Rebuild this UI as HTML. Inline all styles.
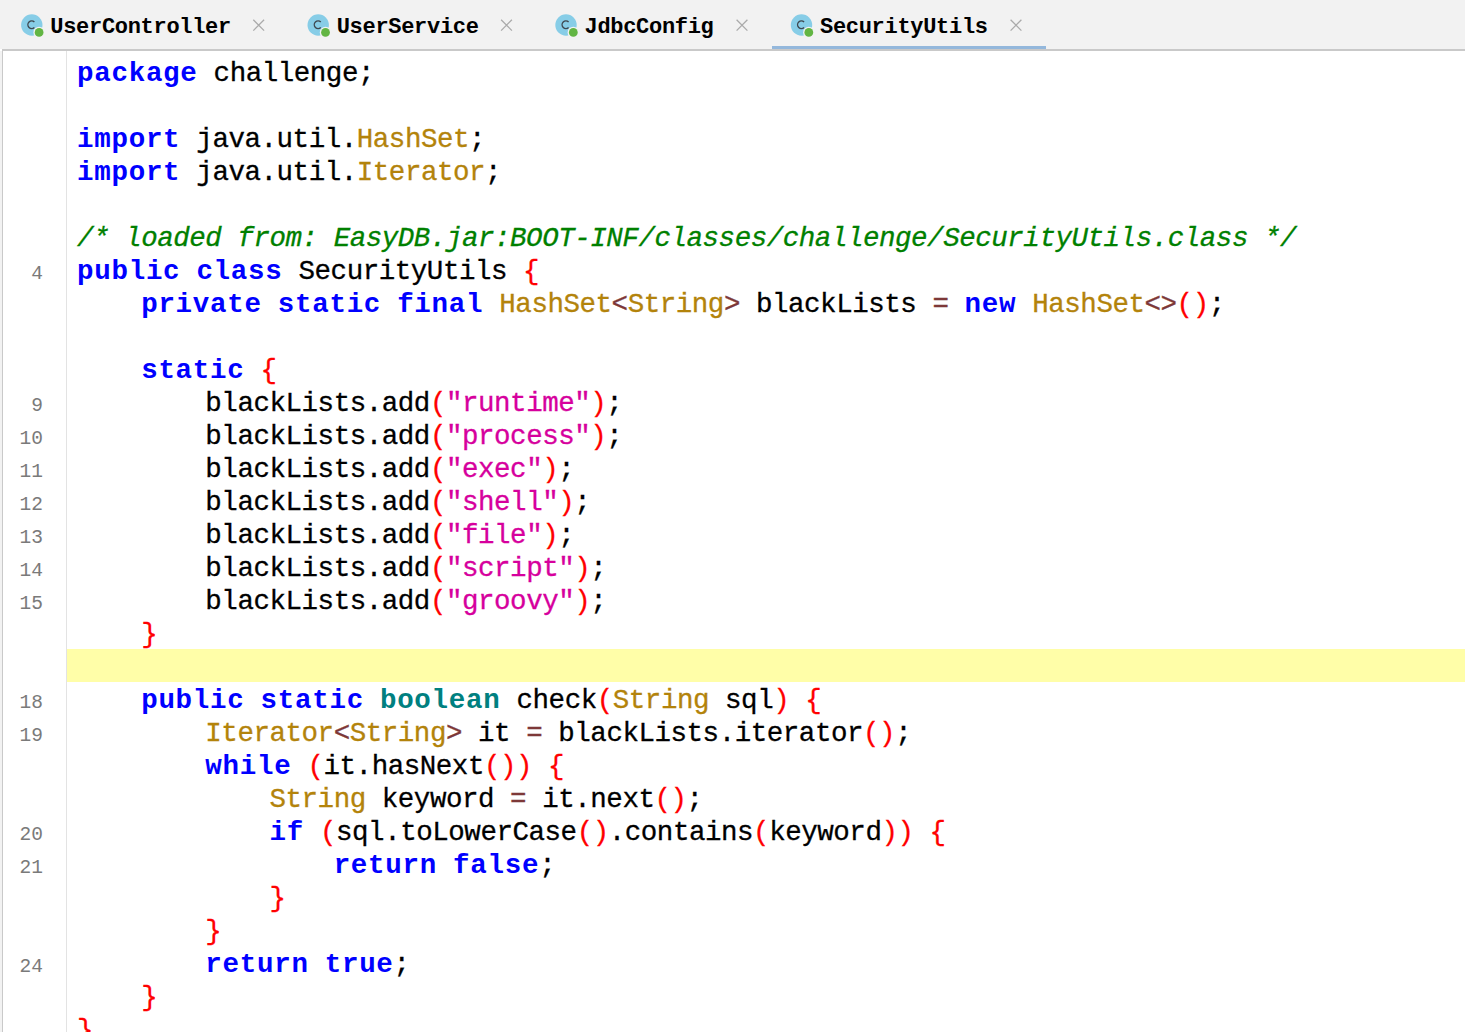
<!DOCTYPE html>
<html><head><meta charset="utf-8"><style>
html,body{margin:0;padding:0;}
body{width:1465px;height:1032px;overflow:hidden;position:relative;background:#fff;font-family:"Liberation Mono",monospace;}
#tabs{position:absolute;left:0;top:0;width:1465px;height:49px;background:#F2F2F2;}
#tabline{position:absolute;left:2px;top:49px;width:1465px;height:2px;background:#C9C9C9;}
#tabsvg{position:absolute;left:0;top:0;}
.tt{position:absolute;top:13px;font-weight:bold;font-size:22px;letter-spacing:-0.3px;line-height:30px;color:#000;white-space:pre;}
.ul{position:absolute;top:46px;height:3px;background:#94B8DC;}
#lborder{position:absolute;left:0;top:51px;width:2px;height:981px;background:#F2F2F2;}
#lborder2{position:absolute;left:2px;top:51px;width:1px;height:981px;background:#C9C9C9;}
#gline{position:absolute;left:66px;top:51px;width:1px;height:981px;background:#E3E3E3;}
#hl{position:absolute;left:67px;top:649px;width:1398px;height:33px;background:#FFFEA8;}
.ln{position:absolute;left:77px;height:33px;line-height:33px;font-size:27.5px;white-space:pre;color:#000;letter-spacing:-0.4627px;-webkit-text-stroke:0.3px;}
.gn{position:absolute;right:1422px;height:33px;line-height:33px;font-size:19.5px;color:#7A7A7A;white-space:pre;}
.k{color:#0000FF;font-weight:bold;letter-spacing:0.7173px;-webkit-text-stroke:0;}
.t{color:#008080;font-weight:bold;letter-spacing:0.7173px;-webkit-text-stroke:0;}
.c{color:#B3830B;}
.s{color:#D6009D;}
.p{color:#FF0000;}
.o{color:#7D3838;}
.m{color:#008000;font-style:italic;}
</style></head><body>
<div id="tabs"></div><div id="tabline"></div>
<div class="tt" style="left:50.3px">UserController</div>
<div class="tt" style="left:336.7px">UserService</div>
<div class="tt" style="left:584.5px">JdbcConfig</div>
<div class="tt" style="left:820.0px">SecurityUtils</div>
<div class="ul" style="left:772.0px;width:274.0px"></div>
<svg id="tabsvg" width="1100" height="50" viewBox="0 0 1100 50"><circle cx="31.80" cy="25.0" r="10.7" fill="#87CDE7"/><circle cx="39.10" cy="32.4" r="5.7" fill="#F2F2F2"/><circle cx="39.10" cy="32.4" r="4.4" fill="#62B543"/><path d="M34.39 22.11 A3.8 3.8 0 1 0 34.39 27.49" fill="none" stroke="#3E4850" stroke-width="1.4"/><path d="M253.30 19.8L264.10 30.6M264.10 19.8L253.30 30.6" stroke="#ABABAB" stroke-width="1.3"/><circle cx="318.20" cy="25.0" r="10.7" fill="#87CDE7"/><circle cx="325.50" cy="32.4" r="5.7" fill="#F2F2F2"/><circle cx="325.50" cy="32.4" r="4.4" fill="#62B543"/><path d="M320.79 22.11 A3.8 3.8 0 1 0 320.79 27.49" fill="none" stroke="#3E4850" stroke-width="1.4"/><path d="M501.10 19.8L511.90 30.6M511.90 19.8L501.10 30.6" stroke="#ABABAB" stroke-width="1.3"/><circle cx="566.00" cy="25.0" r="10.7" fill="#87CDE7"/><circle cx="573.30" cy="32.4" r="5.7" fill="#F2F2F2"/><circle cx="573.30" cy="32.4" r="4.4" fill="#62B543"/><path d="M568.59 22.11 A3.8 3.8 0 1 0 568.59 27.49" fill="none" stroke="#3E4850" stroke-width="1.4"/><path d="M736.60 19.8L747.40 30.6M747.40 19.8L736.60 30.6" stroke="#ABABAB" stroke-width="1.3"/><circle cx="801.50" cy="25.0" r="10.7" fill="#87CDE7"/><circle cx="808.80" cy="32.4" r="5.7" fill="#F2F2F2"/><circle cx="808.80" cy="32.4" r="4.4" fill="#62B543"/><path d="M804.09 22.11 A3.8 3.8 0 1 0 804.09 27.49" fill="none" stroke="#3E4850" stroke-width="1.4"/><path d="M1010.60 19.8L1021.40 30.6M1021.40 19.8L1010.60 30.6" stroke="#ABABAB" stroke-width="1.3"/></svg>
<div id="lborder"></div><div id="lborder2"></div><div id="gline"></div><div id="hl"></div>
<div class="gn" style="top:258px">4</div>
<div class="gn" style="top:390px">9</div>
<div class="gn" style="top:423px">10</div>
<div class="gn" style="top:456px">11</div>
<div class="gn" style="top:489px">12</div>
<div class="gn" style="top:522px">13</div>
<div class="gn" style="top:555px">14</div>
<div class="gn" style="top:588px">15</div>
<div class="gn" style="top:687px">18</div>
<div class="gn" style="top:720px">19</div>
<div class="gn" style="top:819px">20</div>
<div class="gn" style="top:852px">21</div>
<div class="gn" style="top:951px">24</div>
<div class="ln" style="top:57px"><span class="k">package</span><span class="n"> challenge;</span></div>
<div class="ln" style="top:90px"></div>
<div class="ln" style="top:123px"><span class="k">import</span><span class="n"> java.util.</span><span class="c">HashSet</span><span class="n">;</span></div>
<div class="ln" style="top:156px"><span class="k">import</span><span class="n"> java.util.</span><span class="c">Iterator</span><span class="n">;</span></div>
<div class="ln" style="top:189px"></div>
<div class="ln" style="top:222px"><span class="m">/* loaded from: EasyDB.jar:BOOT-INF/classes/challenge/SecurityUtils.class */</span></div>
<div class="ln" style="top:255px"><span class="k">public</span><span class="n"> </span><span class="k">class</span><span class="n"> SecurityUtils </span><span class="p">{</span></div>
<div class="ln" style="top:288px"><span class="n">    </span><span class="k">private</span><span class="n"> </span><span class="k">static</span><span class="n"> </span><span class="k">final</span><span class="n"> </span><span class="c">HashSet</span><span class="o">&lt;</span><span class="c">String</span><span class="o">&gt;</span><span class="n"> blackLists </span><span class="o">=</span><span class="n"> </span><span class="k">new</span><span class="n"> </span><span class="c">HashSet</span><span class="o">&lt;&gt;</span><span class="p">()</span><span class="n">;</span></div>
<div class="ln" style="top:321px"></div>
<div class="ln" style="top:354px"><span class="n">    </span><span class="k">static</span><span class="n"> </span><span class="p">{</span></div>
<div class="ln" style="top:387px"><span class="n">        blackLists.add</span><span class="p">(</span><span class="s">&quot;runtime&quot;</span><span class="p">)</span><span class="n">;</span></div>
<div class="ln" style="top:420px"><span class="n">        blackLists.add</span><span class="p">(</span><span class="s">&quot;process&quot;</span><span class="p">)</span><span class="n">;</span></div>
<div class="ln" style="top:453px"><span class="n">        blackLists.add</span><span class="p">(</span><span class="s">&quot;exec&quot;</span><span class="p">)</span><span class="n">;</span></div>
<div class="ln" style="top:486px"><span class="n">        blackLists.add</span><span class="p">(</span><span class="s">&quot;shell&quot;</span><span class="p">)</span><span class="n">;</span></div>
<div class="ln" style="top:519px"><span class="n">        blackLists.add</span><span class="p">(</span><span class="s">&quot;file&quot;</span><span class="p">)</span><span class="n">;</span></div>
<div class="ln" style="top:552px"><span class="n">        blackLists.add</span><span class="p">(</span><span class="s">&quot;script&quot;</span><span class="p">)</span><span class="n">;</span></div>
<div class="ln" style="top:585px"><span class="n">        blackLists.add</span><span class="p">(</span><span class="s">&quot;groovy&quot;</span><span class="p">)</span><span class="n">;</span></div>
<div class="ln" style="top:618px"><span class="n">    </span><span class="p">}</span></div>
<div class="ln" style="top:651px"></div>
<div class="ln" style="top:684px"><span class="n">    </span><span class="k">public</span><span class="n"> </span><span class="k">static</span><span class="n"> </span><span class="t">boolean</span><span class="n"> check</span><span class="p">(</span><span class="c">String</span><span class="n"> sql</span><span class="p">)</span><span class="n"> </span><span class="p">{</span></div>
<div class="ln" style="top:717px"><span class="n">        </span><span class="c">Iterator</span><span class="o">&lt;</span><span class="c">String</span><span class="o">&gt;</span><span class="n"> it </span><span class="o">=</span><span class="n"> blackLists.iterator</span><span class="p">()</span><span class="n">;</span></div>
<div class="ln" style="top:750px"><span class="n">        </span><span class="k">while</span><span class="n"> </span><span class="p">(</span><span class="n">it.hasNext</span><span class="p">())</span><span class="n"> </span><span class="p">{</span></div>
<div class="ln" style="top:783px"><span class="n">            </span><span class="c">String</span><span class="n"> keyword </span><span class="o">=</span><span class="n"> it.next</span><span class="p">()</span><span class="n">;</span></div>
<div class="ln" style="top:816px"><span class="n">            </span><span class="k">if</span><span class="n"> </span><span class="p">(</span><span class="n">sql.toLowerCase</span><span class="p">()</span><span class="n">.contains</span><span class="p">(</span><span class="n">keyword</span><span class="p">))</span><span class="n"> </span><span class="p">{</span></div>
<div class="ln" style="top:849px"><span class="n">                </span><span class="k">return</span><span class="n"> </span><span class="k">false</span><span class="n">;</span></div>
<div class="ln" style="top:882px"><span class="n">            </span><span class="p">}</span></div>
<div class="ln" style="top:915px"><span class="n">        </span><span class="p">}</span></div>
<div class="ln" style="top:948px"><span class="n">        </span><span class="k">return</span><span class="n"> </span><span class="k">true</span><span class="n">;</span></div>
<div class="ln" style="top:981px"><span class="n">    </span><span class="p">}</span></div>
<div class="ln" style="top:1014px"><span class="p">}</span></div>
</body></html>
